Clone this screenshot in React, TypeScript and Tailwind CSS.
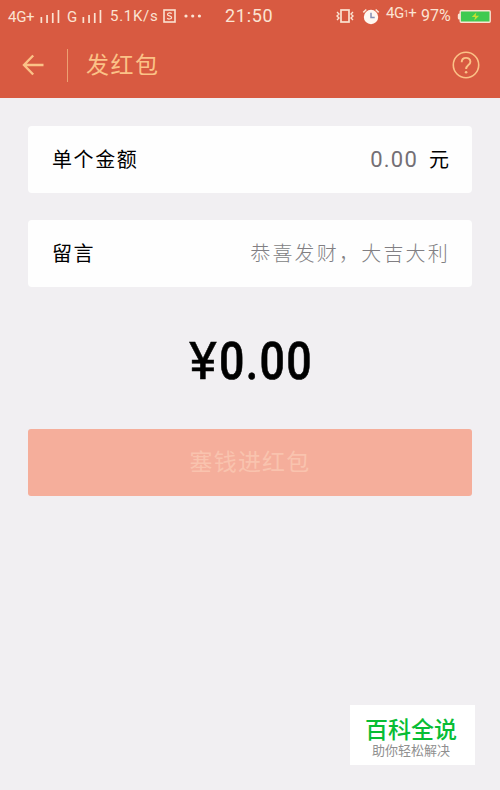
import type { ReactNode } from 'react';

const signalBars = [6, 8, 10, 13];

function Signal() {
  return (
    <svg width="20" height="14" viewBox="0 0 20 14" className="shrink-0" fill="#fbe3d2">
      {signalBars.map((h, i) => (
        <rect key={h} x={0.5 + i * 5.7} y={14 - h} width="1.7" height={h} />
      ))}
    </svg>
  );
}

function StatusBar() {
  return (
    <div className="flex h-8 items-center whitespace-nowrap pl-2 text-[#fbe3d2]">
      <span className="w-8 pt-[3px] text-[15px] tracking-[-0.3px]">4G+</span>
      <Signal />
      <span className="ml-[7px] w-[15px] pt-[3px] text-[15px]">G</span>
      <Signal />
      <span className="ml-2 w-[53px] text-[15px] tracking-[0.7px]">5.1K/s</span>
      <svg width="13" height="14" viewBox="0 0 13 14" className="shrink-0" fill="none" stroke="currentColor">
        <rect x="1" y="1" width="11" height="12" strokeWidth="1.6" />
        <path d="M8.7 4.7C7.8 3.5 4.5 3.7 4.5 5.4S8.6 6.7 8.6 8.5 5.2 10.5 4.2 9.1" strokeWidth="1.2" />
      </svg>
      <svg width="18" height="4" viewBox="0 0 18 4" className="ml-2 shrink-0" fill="currentColor">
        <circle cx="2" cy="2" r="1.6" />
        <circle cx="8.7" cy="2" r="1.6" />
        <circle cx="15.4" cy="2" r="1.6" />
      </svg>
      <span className="ml-[23px] w-[111px] pb-0.5 text-[18px] tracking-[0.7px]">21:50</span>

      {/* Vibrate */}
      <svg width="18" height="16" viewBox="0 0 18 16" className="shrink-0" fill="none" stroke="currentColor">
        <rect x="5" y="2" width="8" height="12" strokeWidth="1.7" />
        <path d="M1 4l2 2-2 2 2 2-2 2M17 4l-2 2 2 2-2 2 2 2" strokeWidth="1.4" />
      </svg>

      {/* Alarm */}
      <svg width="18" height="17" viewBox="0 0 18 17" className="ml-2 shrink-0">
        <circle cx="9" cy="9" r="7.2" fill="#fff7f0" />
        <path d="M1.3 4.3l3-2.8M16.7 4.3l-3-2.8" stroke="#fbe3d2" strokeWidth="1.6" />
        <path d="M9 4.8V9.5h3.7" fill="none" stroke="#8590b5" strokeWidth="1.5" />
      </svg>

      <span className="ml-[6px] flex w-[35px] items-center pb-1.5 text-[15px] tracking-[-0.5px]">
        4G<span className="pt-1 text-[9px]">1</span>+
      </span>
      <span className="w-[36px] text-[16px]">97%</span>
      <svg width="35" height="15" viewBox="0 0 35 15" className="shrink-0">
        <path d="M3.5 4.5H2.2Q.8 4.5.8 6v3q0 1.5 1.4 1.5h1.3z" fill="#fbe3d2" />
        <rect x="3.2" y="1.7" width="30" height="11.6" rx="1" fill="#3fca50" stroke="#fbe3d2" strokeWidth="1.4" />
        <path d="M19.3 3.5l-4.5 4.4h3.3l-.8 3.6 4.8-4.8h-3.4z" fill="#c5df34" />
      </svg>
    </div>
  );
}

function TitleBar() {
  return (
    <div className="flex h-[66px] items-center pl-[22px] pr-5 text-[#fbc287]">
      <svg width="22" height="22" viewBox="0 0 22 22" fill="none" stroke="currentColor" strokeWidth="2.4">
        <path d="M11.2 1.5L2 11l9.2 9.5M2 11h19.5" />
      </svg>
      <div className="ml-[23px] h-[33px] w-px bg-[#eda071]" />
      <h1 className="ml-[18px] text-[23px] leading-none font-normal tracking-[1.5px]">发红包</h1>
      <svg width="28" height="28" viewBox="0 0 28 28" className="ml-auto" fill="none" stroke="currentColor">
        <circle cx="14" cy="14" r="12.7" strokeWidth="1.6" />
        <path d="M9.7 11.2C9.7 5.4 18.4 5.6 18.4 10.7c0 3.5-4.3 3.3-4.3 7.4" strokeWidth="1.9" />
        <circle cx="14.1" cy="21.2" r="1.3" fill="currentColor" stroke="none" />
      </svg>
    </div>
  );
}

function Field({ label, children }: { label: string; children: ReactNode }) {
  return (
    <div className="flex h-[67px] items-center justify-between rounded-[4px] bg-[#fefefe] pl-6 pr-[22px]">
      <span className="text-[20px] leading-none tracking-[1.6px] text-black">{label}</span>
      {children}
    </div>
  );
}

export default function App() {
  return (
    <div className="flex h-[790px] w-[500px] flex-col overflow-hidden bg-[#f1eff2] font-['Roboto','Noto_Sans_CJK_SC',sans-serif]">
      <header className="h-[98px] bg-[#d85a41]">
        <StatusBar />
        <TitleBar />
      </header>

      <main className="flex flex-col px-7 pt-7">
        <Field label="单个金额">
          <div className="flex items-center pr-px">
            <span className="text-[22px] leading-none tracking-[1.2px] text-[#746f75]">0.00</span>
            <span className="ml-[11px] text-[20px] leading-none text-black">元</span>
          </div>
        </Field>
        <div className="h-[27px]" />
        <Field label="留言">
          <span className="text-[20px] leading-none font-light tracking-[2.2px] text-[#817f83]">恭喜发财，大吉大利</span>
        </Field>

        <div className="mt-12 ml-[161px] flex h-[54px] w-[140px] items-center text-[52px] leading-none text-black">
          <span className="w-[30px] origin-left font-normal scale-x-[1.02] [-webkit-text-stroke:0.5px_black]">¥</span>
          <span className="origin-left scale-x-[0.86] font-medium tracking-[1.5px] [-webkit-text-stroke:0.6px_black]">0.00</span>
        </div>

        <button className="mt-10 h-[67px] rounded-[3px] bg-[#f5ae9b] text-[23px] leading-none font-normal tracking-[1.2px] text-[#f9c3ae]">
          塞钱进红包
        </button>
      </main>

      <div className="mt-auto mr-[25px] mb-[25px] flex h-[60px] w-[125px] flex-col items-center self-end bg-white pt-[13px] pr-[3px]">
        <span className="text-[23px] leading-[25px] font-medium text-[#08bd35]">百科全说</span>
        <span className="text-[13px] leading-4 text-[#8f8f8f]">助你轻松解决</span>
      </div>
    </div>
  );
}
